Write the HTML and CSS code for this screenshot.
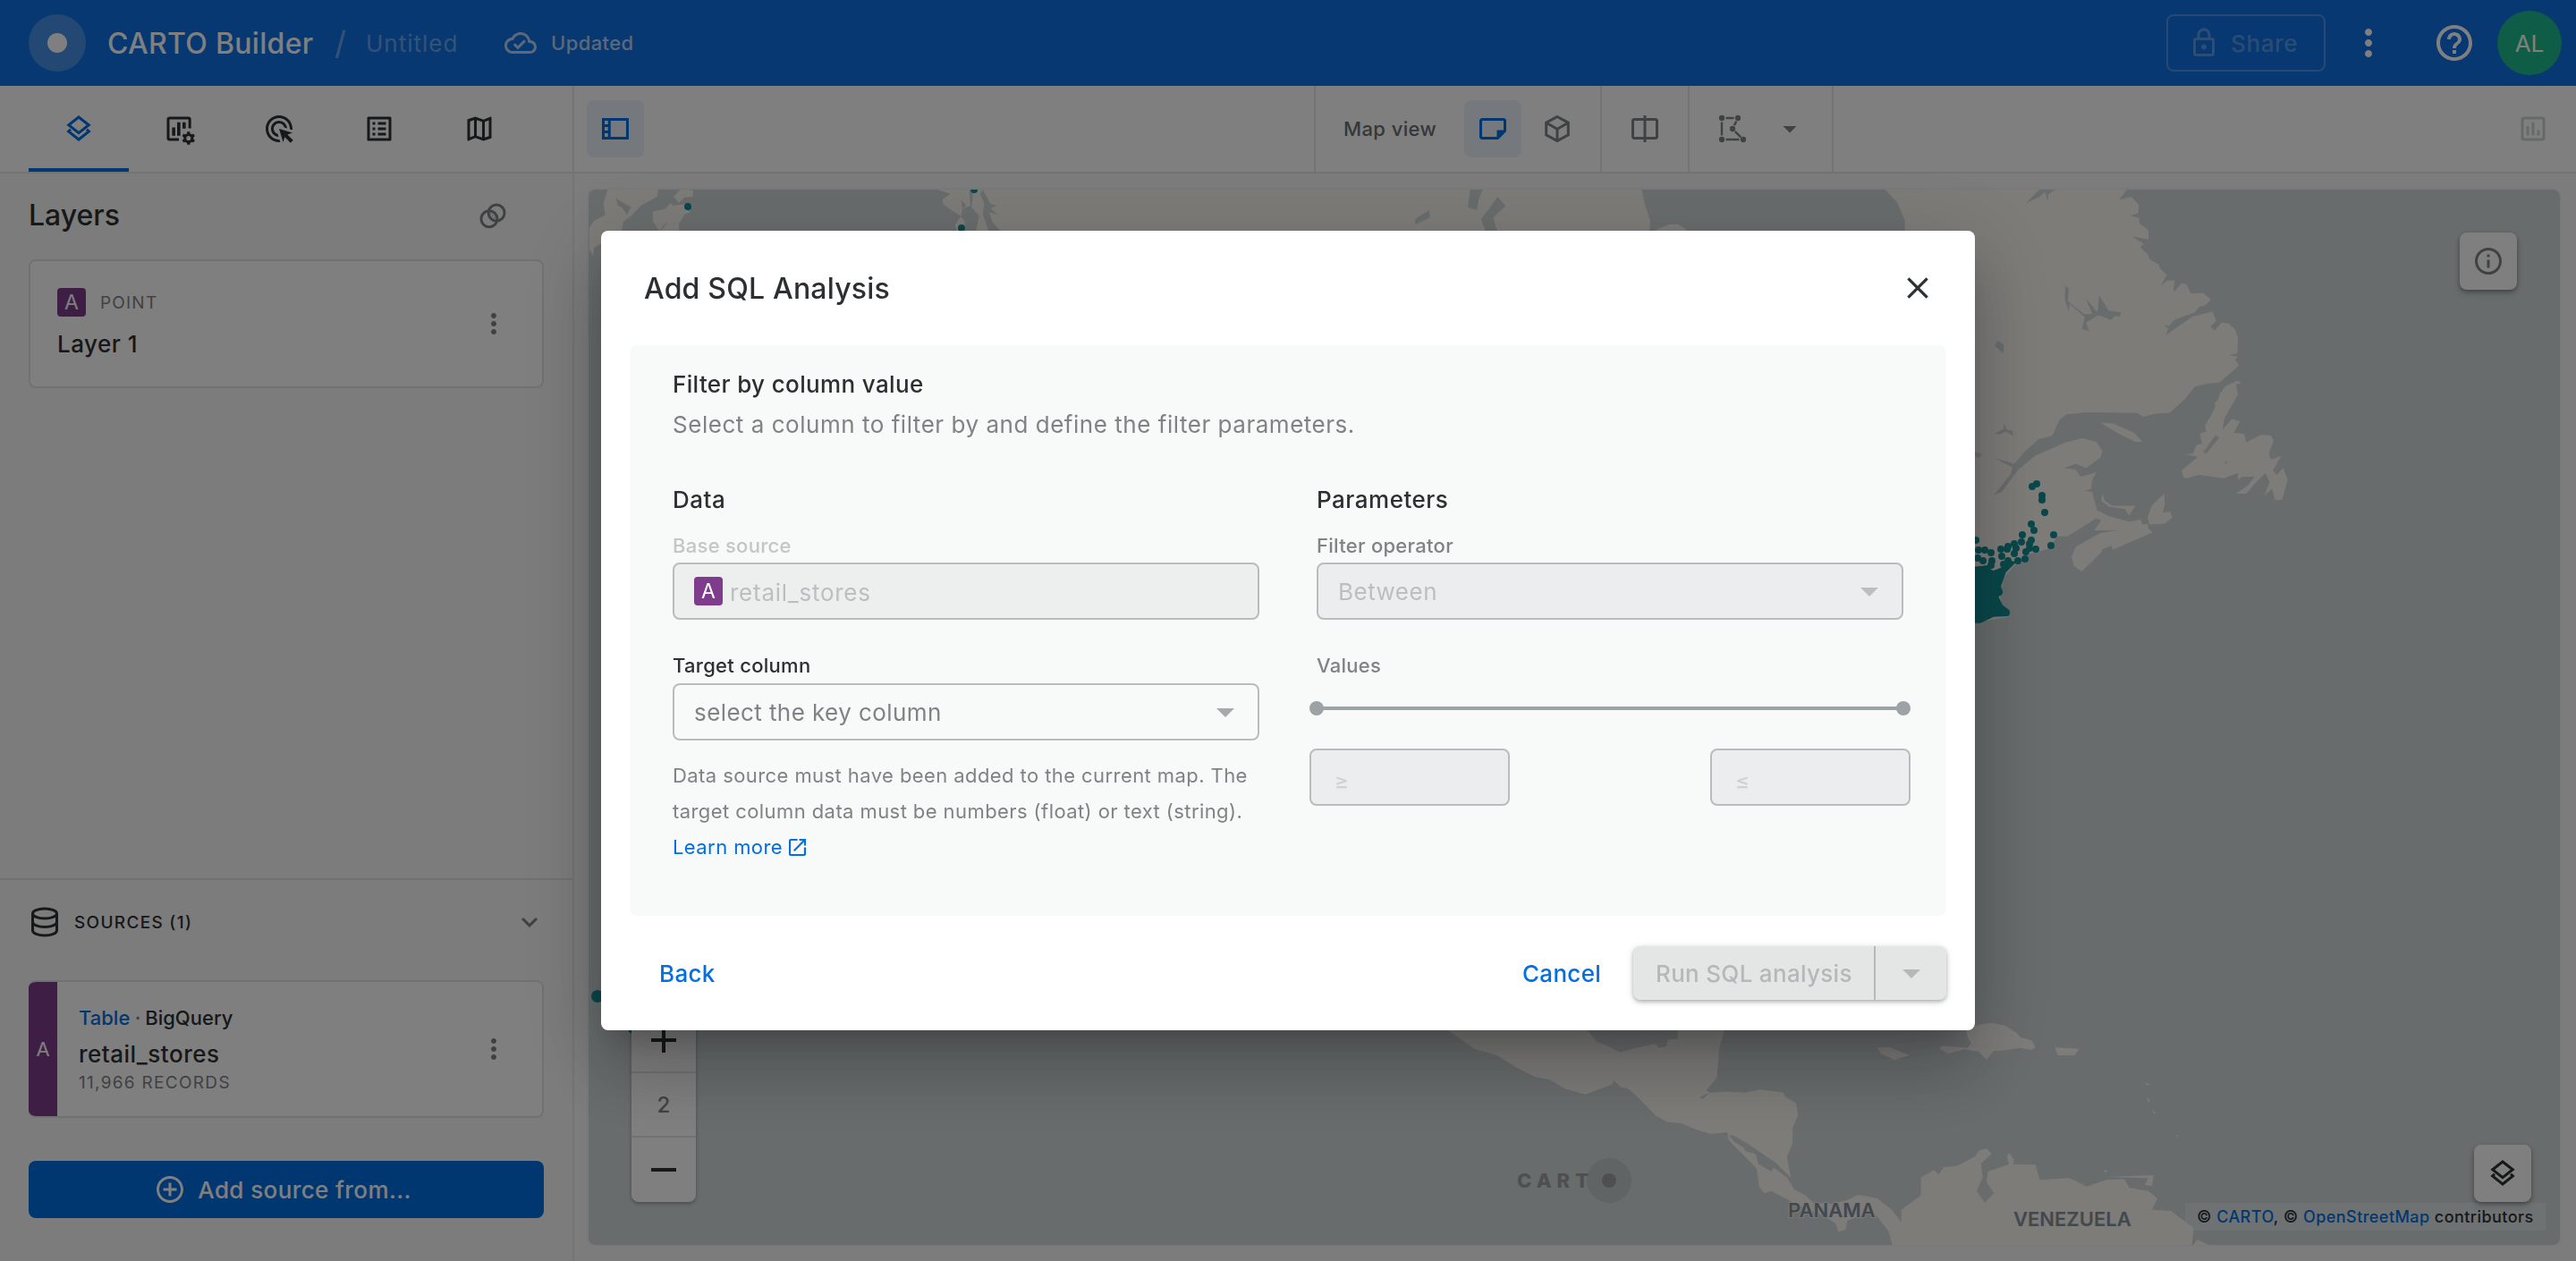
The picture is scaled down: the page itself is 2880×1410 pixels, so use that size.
FILE: index.html
```html
<!DOCTYPE html>
<html lang="en">
<head>
<meta charset="utf-8">
<title>CARTO Builder</title>
<link rel="stylesheet" href="styles.css">
</head>
<body>
<div class="app">
  <header class="topbar">
    <span class="logo"><span class="logo-dot"></span></span>
    <span class="brand">CARTO Builder</span>
    <span class="slash">/</span>
    <span class="map-name">Untitled</span>
    <svg class="i36 cloud" viewBox="0 0 24 24"><path d="M19.35 10.04C18.67 6.59 15.64 4 12 4 9.11 4 6.6 5.64 5.35 8.04 2.34 8.36 0 10.91 0 14c0 3.31 2.69 6 6 6h13c2.76 0 5-2.24 5-5 0-2.64-2.05-4.78-4.65-4.96zM19 18H6c-2.21 0-4-1.79-4-4 0-2.05 1.53-3.76 3.56-3.97l1.07-.11.5-.95C8.08 7.14 9.94 6 12 6c2.62 0 4.88 1.86 5.39 4.43l.3 1.5 1.53.11c1.56.1 2.78 1.41 2.78 2.96 0 1.65-1.35 3-3 3zm-9-3.82l-2.09-2.09L6.5 13.5 10 17l6.01-6.01-1.41-1.41z"/></svg>
    <span class="status">Updated</span>
    <span class="share"><svg class="i36" viewBox="0 0 24 24"><path d="M18 8h-1V6c0-2.76-2.24-5-5-5S7 3.24 7 6v2H6c-1.1 0-2 .9-2 2v10c0 1.100.9 2 2 2h12c1.100 0 2-.9 2-2V10c0-1.100-.9-2-2-2zM9 6c0-1.660 1.340-3 3-3s3 1.340 3 3v2H9V6zm9 14H6V10h12v10zm-6-3c1.100 0 2-.9 2-2s-.9-2-2-2-2 .9-2 2 .9 2 2 2z"/></svg><span>Share</span></span>
    <svg class="i48 top-more" viewBox="0 0 24 24"><path d="M12 8c1.100 0 2-.9 2-2s-.9-2-2-2-2 .9-2 2 .9 2 2 2zm0 2c-1.100 0-2 .9-2 2s.9 2 2 2 2-.9 2-2-.9-2-2-2zm0 6c-1.100 0-2 .9-2 2s.9 2 2 2 2-.9 2-2-.9-2-2-2z"/></svg>
    <svg class="i48 top-help" viewBox="0 0 24 24"><path d="M11 18h2v-2h-2v2zm1-16C6.480 2 2 6.480 2 12s4.480 10 10 10 10-4.480 10-10S17.520 2 12 2zm0 18c-4.410 0-8-3.590-8-8s3.590-8 8-8 8 3.590 8 8-3.590 8-8 8zm0-14c-2.210 0-4 1.790-4 4h2c0-1.100.9-2 2-2s2 .9 2 2c0 2-3 1.750-3 5h2c0-2.250 3-2.500 3-5 0-2.210-1.790-4-4-4z"/></svg>
    <span class="avatar">AL</span>
  </header>

  <div class="workspace">
    <aside class="sidebar">
      <nav class="tabs">
        <span class="tab active"><svg class="i36" viewBox="0 0 24 24"><path class="ln" d="M12 3.300l7.500 5.900-7.500 5.900-7.500-5.900z"/><path class="ln" d="M6 12.500l-1.600 1.500 7.600 6 7.600-6-1.600-1.500"/></svg></span>
        <span class="tab"><svg class="i36" viewBox="0 0 24 24"><path class="ln" d="M20.100 11.700V5c0-.6-.4-1-1-1H5c-.6 0-1 .4-1 1v14c0 .6.4 1 1 1h7"/><path d="M6.900 11h2.400v6.200H6.900zM10.700 7.200h2.400v10h-2.400zM14.700 7.200h2.400v4.600h-2.400z"/><circle class="ln" cx="19.200" cy="19" r="2.700"/><path class="cog" d="M19.200 14.100v1.800M19.200 22.100v1.800M15 16.600l1.500.9M21.900 20.500l1.500.9M15 21.400l1.500-.9M21.900 17.500l1.500-.9"/></svg></span>
        <span class="tab"><svg class="i36" viewBox="0 0 24 24"><path d="M11.710 17.990C8.530 17.840 6 15.220 6 12c0-3.310 2.690-6 6-6 3.220 0 5.840 2.530 5.990 5.710l-2.100-.63C15.480 9.310 13.890 8 12 8c-2.210 0-4 1.790-4 4 0 1.890 1.310 3.480 3.080 3.890l.63 2.100zM22 12c0 .3-.01.6-.04.9l-1.970-.59c.01-.1.010-.210.010-.310 0-4.420-3.580-8-8-8s-8 3.580-8 8 3.580 8 8 8c.1 0 .210 0 .310-.01l.59 1.970c-.3.030-.6.040-.9.040-5.520 0-10-4.480-10-10S6.480 2 12 2s10 4.480 10 10zm-3.770 4.260L22 15l-10-3 3 10 1.260-3.770 4.270 4.270 1.980-1.980-4.280-4.260z"/></svg></span>
        <span class="tab"><svg class="i36" viewBox="0 0 24 24"><path d="M19 5v14H5V5h14m1.100-2H3.900c-.5 0-.9.4-.9.9v16.200c0 .4.4.9.9.9h16.200c.4 0 .9-.5.9-.9V3.900c0-.5-.5-.9-.9-.9zM11 7h6v2h-6V7zm0 4h6v2h-6v-2zm0 4h6v2h-6zM7 7h2v2H7zm0 4h2v2H7zm0 4h2v2H7z"/></svg></span>
        <span class="tab"><svg class="i36" viewBox="0 0 24 24"><path d="M20.500 3l-.16.03L15 5.100 9 3 3.360 4.900c-.21.07-.36.25-.36.48V20.500c0 .28.22.5.5.5l.16-.03L9 18.900l6 2.100 5.640-1.900c.21-.07.36-.25.36-.48V3.500c0-.28-.22-.5-.5-.5zM10 5.470l4 1.400v11.660l-4-1.400V5.470zm-5 .99l3-1.010v11.700l-3 1.160V6.460zm14 11.080l-3 1.010V6.860l3-1.160v11.840z"/></svg></span>
      </nav>
      <div class="layers">
        <div class="layers-head"><span class="h-layers">Layers</span><svg class="i36 soft" viewBox="0 0 24 24"><circle class="ln" cx="9.300" cy="14.500" r="6"/><circle class="ln" cx="14.700" cy="10" r="6"/><path class="dots" d="M10 10.500l4 3.500M10 13l3 2.500M12 9.800l2.500 2.200"/></svg></div>
        <div class="layer-card">
          <div class="layer-info">
            <div class="layer-type"><span class="badge">A</span><span class="overline">POINT</span></div>
            <span class="layer-name">Layer 1</span>
          </div>
          <svg class="i36 soft" viewBox="0 0 24 24"><path d="M12 8c1.100 0 2-.9 2-2s-.9-2-2-2-2 .9-2 2 .9 2 2 2zm0 2c-1.100 0-2 .9-2 2s.9 2 2 2 2-.9 2-2-.9-2-2-2zm0 6c-1.100 0-2 .9-2 2s.9 2 2 2 2-.9 2-2-.9-2-2-2z"/></svg>
        </div>
      </div>
      <div class="sources">
        <div class="sources-head">
          <svg class="i36" viewBox="0 0 24 24"><ellipse class="ln" cx="12" cy="5.700" rx="9" ry="3.700"/><path class="ln" d="M3 5.700v12.600c0 2 4 3.700 9 3.700s9-1.700 9-3.700V5.700M3 12c0 2 4 3.700 9 3.700s9-1.700 9-3.700"/></svg>
          <span class="src-title">SOURCES (1)</span>
          <svg class="i36 soft chev" viewBox="0 0 24 24"><path d="M7.410 8.590L12 13.170l4.590-4.580L18 10l-6 6-6-6z"/></svg>
        </div>
        <div class="source-card">
          <span class="strip">A</span>
          <div class="source-info">
            <span class="src-kind"><b>Table</b><i> · </i>BigQuery</span>
            <span class="src-name">retail_stores</span>
            <span class="src-count">11,966 RECORDS</span>
          </div>
          <svg class="i36 soft" viewBox="0 0 24 24"><path d="M12 8c1.100 0 2-.9 2-2s-.9-2-2-2-2 .9-2 2 .9 2 2 2zm0 2c-1.100 0-2 .9-2 2s.9 2 2 2 2-.9 2-2-.9-2-2-2zm0 6c-1.100 0-2 .9-2 2s.9 2 2 2 2-.9 2-2-.9-2-2-2z"/></svg>
        </div>
        <div class="add-source"><svg class="i36" viewBox="0 0 24 24"><path d="M13 7h-2v4H7v2h4v4h2v-4h4v-2h-4V7zm-1-5C6.480 2 2 6.480 2 12s4.480 10 10 10 10-4.480 10-10S17.520 2 12 2zm0 18c-4.410 0-8-3.590-8-8s3.590-8 8-8 8 3.590 8 8-3.590 8-8 8z"/></svg><span>Add source from...</span></div>
      </div>
    </aside>

    <main class="main">
      <div class="toolbar">
        <span class="tool-btn on"><svg class="i36" viewBox="0 0 24 24"><path d="M2 4v16h20V4H2zm4.500 14H4v-2.700h2.500V18zm0-4.700H4v-2.600h2.500v2.600zm0-4.600H4V6h2.500v2.700zM20 18H8.500V6H20v12z"/></svg></span>
        <div class="tool-group view-group">
          <span class="map-view">Map view</span>
          <span class="tool-btn on"><svg class="i36" viewBox="0 0 24 24"><path d="M20 4H4c-1.100 0-2 .9-2 2v12c0 1.100.9 2 2 2h12l6-6V6c0-1.100-.9-2-2-2zM4 6h16v7h-5v5H4V6z"/></svg></span>
          <svg class="i36 soft" viewBox="0 0 24 24"><path class="ln" d="M12 3l8.200 4.500v9L12 21l-8.200-4.500v-9zM3.800 7.500l8.200 4.700 8.200-4.700M12 12v9"/></svg>
        </div>
        <div class="tool-group split-group"><svg class="i36 soft" viewBox="0 0 24 24"><path d="M13 2h-2v2H4c-1.100 0-2 .9-2 2v12c0 1.100.9 2 2 2h7v2h2v-2h7c1.100 0 2-.9 2-2V6c0-1.100-.9-2-2-2h-7V2zM4 18V6h7v12H4zm9 0V6h7v12h-7z"/></svg></div>
        <div class="tool-group draw-group">
          <svg class="i36 soft" viewBox="0 0 24 24"><circle cx="4" cy="4" r="2.100"/><circle cx="16" cy="4" r="2.100"/><circle cx="12" cy="12" r="2.100"/><circle cx="4" cy="20" r="2.100"/><circle cx="20" cy="20" r="2.100"/><path class="thin" d="M7 4h6M4 7v10M7 20h10M14.800 6.400l-1.500 3M13.800 13.900l4.400 4.300"/></svg>
          <svg class="i36 soft" viewBox="0 0 24 24"><path d="M7 10l5 5 5-5z"/></svg>
        </div>
        <svg class="i36 chart" viewBox="0 0 24 24"><path d="M19 3H5c-1.100 0-2 .9-2 2v14c0 1.100.9 2 2 2h14c1.100 0 2-.9 2-2V5c0-1.100-.9-2-2-2zm0 16H5V5h14v14zM7 10h2v7H7zm4-3h2v10h-2zm4 6h2v4h-2z"/></svg>
      </div>
      <div class="map-wrap">
        <div class="map">
          <svg class="basemap" viewBox="658 212 2204 1180">
            <g class="land">
              <g transform="scale(.61225 .33333)">
                <path d="M1110 636H1202L1200 660 1170 690 1155 720 1138 745 1135 780H1110L1098 800V815L1085 830 1083 860 1076 835V765L1085 740 1105 720 1102 680z"/>
                <path d="M1245 630L1266 640 1265 660 1250 662 1240 680 1230 660zM1225 680L1228 690 1250 685 1255 705 1262 710 1250 720 1240 750 1240 780H1205L1192 740V710L1215 700z"/>
                <path class="water" d="M1125 665L1152 695 1145 720 1135 695 1128 690zM1220 740L1212 765 1203 775z"/>
              </g>
              <g transform="translate(650 200) scale(.70153 .33333)">
                <path d="M568 36H2300V190H602L595 155 605 125 590 105 577 85 575 70 588 50z"/>
                <path class="water" d="M618 36L620 90 608 100 605 125 611 145 612 180H628L634 125 622 95 624 50zM640 36L652 85 662 88 653 100 663 120 650 112 655 145 670 180H650L640 120 642 80 635 50z"/>
                <path class="water" d="M605 70L614 90 607 100z"/>
              </g>
              <g transform="translate(1440 0) scale(.91834 .33333)" class="water">
                <path d="M430 630H725L742 680 751 740V780H490L475 752H465L440 780 441 740 435 690zM222 630H238L232 670 230 705 219 695zM255 660L265 690 250 730 255 780H241L235 735 245 700zM155 735L172 705 173 730 155 752z"/>
              </g>
              <g transform="translate(2160 200) scale(.45918 .38265)">
                <path d="M-10 30H475L455 62 485 52 503 75V100L483 108 505 115V130L527 150V177L487 168 515 190 507 200 525 220 530 235 552 250 555 262 572 280 557 312 572 298 590 296 588 332 608 305 620 308 630 335 660 333 679 353 665 370 650 374 640 390 590 412 577 430 565 427 575 437 570 456 635 402 683 388 692 415 678 432 688 442 705 420 722 422 738 440 745 465 743 510 723 514 745 520 738 528 748 545 700 595 675 597 640 607 615 645 578 684 545 686 515 695 500 684 375 682 328 688 310 704 293 750 258 762 228 795 198 835 190 865 150 925 105 948 170 915 210 850 250 810 325 770 365 758 400 768 415 795 410 815 375 845 350 833 320 845 350 850 362 870 400 858 390 880 388 905 373 912 390 915 402 968 430 985 480 1002 508 995 513 1010 525 1008 527 1022 537 1033 440 1084 437 1072 415 1082 412 1092 365 1147 345 1130 340 1105 350 1075 410 1035 450 1027 395 1027 412 998 400 992 350 1030 330 1045 305 1045 285 1080 265 1088 240 1095 200 1130 175 1165 165 1220 170 1250 185 1280 105 1297H-10z"/>
                <path d="M745 590L715 605 700 630 697 645 688 655 690 665 680 690 665 720 668 738 652 745 658 775 645 776 635 803 615 805 648 812 608 852 612 872 620 875 650 865 710 875 745 860 745 880 755 870 785 870 770 895 740 920 765 920 790 885 812 860 822 885 810 925 828 905 835 938H852L866 880 855 845 840 865 830 852 850 810 825 820 820 802 832 765 825 750 800 748 765 770 760 745 735 742 750 708 730 702 708 732 712 700 745 630 740 600 753 598z"/>
                <path d="M410 712L440 715 490 740 513 768 495 768 455 745zM415 920L420 940 440 955H495L480 983 470 965 430 958 412 940zM565 920L567 950 562 975 580 972 585 990 565 1008 530 1010 525 990 535 955z"/>
                <path class="water" d="M325 310L333 322 331 358 370 395 390 395 375 350 403 390 407 340 430 385 460 390 458 402 445 402 435 412 405 398 375 420 383 445 365 438 372 404 335 365 333 388 323 350zM152 488L160 473 175 485 173 510 160 495zM152 745L175 730V712L182 733 195 735 199 752 180 738 165 747zM228 72L262 30H302L283 45 282 65 275 38 262 52zM105 797L122 805 115 815 105 812zM150 815L200 833 195 842zM660 800L690 750 700 755 668 802zM710 835L718 822V830z"/>
              </g>
              <g transform="translate(1560 1130) scale(.84184 .33333)">
                <path d="M62 50L70 66 105 128 135 150 160 190 185 222 205 232 225 262 252 281 288 248 290 235 300 258 308 260 320 285 345 350 360 373 380 378 400 400 420 414 440 408 450 440 480 485 520 560 530 600 545 620 555 645 580 648 600 636 615 618 640 630 660 670 672 710V668L698 620V560L715 535 722 550 728 525 745 522 770 490 775 470 785 462 792 480 778 512 780 560 772 605 783 645 795 612 785 575 787 540 815 515 812 490 815 478 822 500 820 515 850 517 856 568 895 562 918 590 945 568 968 565 975 595 1000 605 1012 630 1005 668 1030 672 1060 730 1058 786H660L655 740 640 690 625 680 600 705 598 735 588 742 585 715 570 690 545 665 525 640 500 605 490 610 483 585 480 530 443 435 441 416 450 420 470 450 505 510 525 560 520 490 527 450 528 390 535 350 532 310 518 290 515 275 485 265 465 275 440 272 418 276 413 268 427 225 430 130 437 66 V50H375V95L362 97 360 120 350 125 345 112 315 128 298 140 283 120 268 105 255 66V50z"/>
                <path d="M483 535L490 560 512 590 550 640 530 645 500 605 490 612 483 590z"/>
                <path d="M758 60L780 45 793 42 810 50 825 75 830 90 845 100 850 122 845 132 830 125 805 135 795 135 785 165 775 138 755 130 735 145 723 130 725 118 760 125 765 110 760 90zM640 125L655 122 683 150 663 165 645 145zM876 124L908 128 902 150H880zM945 558L1007 552 1005 588 995 585 1000 562zM1060 786L1065 768 1080 786zM996 240L1003 248 998 250zM998 290L1002 300 1000 308zM1037 416L1041 422H1038zM940 535L947 538 943 543zM1006 330L1010 345H1007z"/>
                <path class="water" d="M462 458L472 462 474 478 465 472zM478 475L490 490 502 525 500 540 482 515zM404 290L418 275 408 297zM430 130L433 100 436 128z"/>
              </g>
            </g>
            <g class="stores">
              <path transform="translate(2160 200) scale(.45918 .38265)" d="M90 1135L128 1130 150 1145 170 1135 180 1112 205 1120 180 1150 168 1190 172 1210 162 1222 172 1245 188 1260 185 1278 150 1280 118 1298H90z"/>
              <g>
                <circle cx="769" cy="231" r="4"/><circle cx="1089" cy="212" r="4"/><circle cx="1075" cy="255" r="4"/>
                <circle cx="668" cy="1114" r="7"/><circle cx="708" cy="1150" r="6"/>
                <circle cx="2277" cy="541" r="4"/><circle cx="2272" cy="544" r="4"/><circle cx="2283" cy="554" r="4"/><circle cx="2283" cy="559" r="4"/><circle cx="2286" cy="573" r="4"/><circle cx="2271" cy="586" r="4"/><circle cx="2274" cy="593" r="4"/><circle cx="2261" cy="598" r="4"/><circle cx="2296" cy="598" r="4"/><circle cx="2293" cy="610" r="4"/><circle cx="2271" cy="604" r="4"/><circle cx="2269" cy="608" r="4"/><circle cx="2260" cy="606" r="4"/><circle cx="2252" cy="608" r="4"/><circle cx="2245" cy="611" r="4"/><circle cx="2244" cy="614" r="4"/><circle cx="2254" cy="613" r="4"/><circle cx="2276" cy="614" r="4"/><circle cx="2265" cy="617" r="4"/><circle cx="2269" cy="613" r="4"/><circle cx="2237" cy="614" r="4"/><circle cx="2252" cy="619" r="4"/><circle cx="2238" cy="622" r="4"/><circle cx="2264" cy="625" r="4"/><circle cx="2256" cy="627" r="4"/><circle cx="2226" cy="618" r="4"/><circle cx="2219" cy="615" r="4"/><circle cx="2212" cy="615" r="4"/><circle cx="2209" cy="604" r="4"/><circle cx="2211" cy="624" r="4"/><circle cx="2217" cy="627" r="4"/><circle cx="2227" cy="627" r="4"/><circle cx="2226" cy="632" r="4"/><circle cx="2240" cy="631" r="4"/><circle cx="2221" cy="636" r="4"/><circle cx="2232" cy="641" r="4"/><circle cx="2213" cy="645" r="4"/><circle cx="2235" cy="662" r="4"/><circle cx="2243" cy="685" r="4"/><circle cx="2245" cy="627" r="4"/>
              </g>
            </g>
            <g class="watermark"><circle cx="1799" cy="1320" r="25" class="wm-ring"/><circle cx="1799" cy="1320" r="8"/><text x="1696" y="1328">CART</text></g>
            <text class="country" x="1999" y="1361">PANAMA</text>
            <text class="country" x="2251" y="1371">VENEZUELA</text>
          </svg>
          <div class="map-btn info-btn"><svg class="i36 soft" viewBox="0 0 24 24"><path d="M11 7h2v2h-2zm0 4h2v6h-2zm1-9C6.480 2 2 6.480 2 12s4.480 10 10 10 10-4.480 10-10S17.520 2 12 2zm0 18c-4.410 0-8-3.590-8-8s3.590-8 8-8 8 3.590 8 8-3.590 8-8 8z"/></svg></div>
          <div class="zoomer">
            <span class="zoom-in"><svg class="i48" viewBox="0 0 24 24"><path d="M19 13h-6v6h-2v-6H5v-2h6V5h2v6h6z"/></svg></span>
            <span class="level">2</span>
            <span><svg class="i48" viewBox="0 0 24 24"><path d="M19 13H5v-2h14z"/></svg></span>
          </div>
          <div class="attribution">© <a>CARTO</a>, © <a>OpenStreetMap</a> contributors</div>
          <div class="map-btn legend-btn"><svg class="i36" viewBox="0 0 24 24"><path class="ln" d="M12 3.300l7.500 5.900-7.500 5.900-7.500-5.900z"/><path class="ln" d="M6 12.500l-1.600 1.500 7.600 6 7.600-6-1.600-1.500"/></svg></div>
        </div>
      </div>
    </main>
  </div>
</div>

<div class="backdrop">
  <section class="modal">
    <div class="modal-head"><span class="modal-title">Add SQL Analysis</span><svg class="i48 close" viewBox="0 0 24 24"><path d="M6.700 6.700l10.600 10.600M17.300 6.700L6.700 17.300"/></svg></div>
    <div class="panel">
      <div class="sub">Filter by column value</div>
      <div class="desc">Select a column to filter by and define the filter parameters.</div>
      <div class="cols">
        <div class="col">
          <div class="sec">Data</div>
          <div class="label first off">Base source</div>
          <div class="field disabled"><span class="badge">A</span><span class="base-val">retail_stores</span></div>
          <div class="label second dark">Target column</div>
          <div class="field"><span class="sel-val">select the key column</span><svg class="i48" viewBox="0 0 24 24"><path d="M7 10l5 5 5-5z"/></svg></div>
          <p class="helper">Data source must have been added to the current map. The<br>target column data must be numbers (float) or text (string).<br><a>Learn more <svg viewBox="3 3 18 18"><path d="M19 19H5V5h7V3H5c-1.110 0-2 .9-2 2v14c0 1.100.89 2 2 2h14c1.100 0 2-.9 2-2v-7h-2v7zM14 3v2h3.590l-9.830 9.830 1.410 1.410L19 6.410V10h2V3h-7z"/></svg></a></p>
        </div>
        <div class="col">
          <div class="sec">Parameters</div>
          <div class="label first">Filter operator</div>
          <div class="field disabled cool"><span class="op-val">Between</span><svg class="i48" viewBox="0 0 24 24"><path d="M7 10l5 5 5-5z"/></svg></div>
          <div class="label second">Values</div>
          <div class="slider"><span class="thumb"></span><span class="rail"></span><span class="thumb"></span></div>
          <div class="bounds"><div class="field disabled cool bound">≥</div><div class="field disabled cool bound">≤</div></div>
        </div>
      </div>
    </div>
    <div class="modal-foot">
      <a class="btn back">Back</a>
      <a class="btn cancel">Cancel</a>
      <div class="run"><span class="run-label">Run SQL analysis</span><span class="run-more"><svg class="i48" viewBox="0 0 24 24"><path d="M7 10l5 5 5-5z"/></svg></span></div>
    </div>
  </section>
</div>
</body>
</html>
```
FILE: styles.css
```css
* { box-sizing: border-box; }
body { margin: 0; font-family: Inter, "Liberation Sans", sans-serif; font-optical-sizing: none; color: #2c3032; background: #f8f9f9; }
svg { display: block; fill: currentColor; flex: none; }
.i36 { width: 36px; height: 36px; }
.i48 { width: 48px; height: 48px; }
.ln { fill: none; stroke: currentColor; stroke-width: 2; }
.cog { fill: none; stroke: currentColor; stroke-width: 2.2; }
.thin { fill: none; stroke: currentColor; stroke-width: 1.6; }
.dots { fill: none; stroke: currentColor; stroke-width: 1; stroke-dasharray: 1 1; opacity: .7; }
.soft { color: #7f8385; }
a { color: #036fe2; }

.app { width: 2880px; height: 1410px; display: flex; flex-direction: column; overflow: hidden; }
.topbar { height: 96px; flex: none; display: flex; align-items: center; padding: 0 16px 0 32px; background: #1070e3; color: #fff; }
.logo { width: 64px; height: 64px; border-radius: 50%; background: rgba(255,255,255,.23); display: flex; align-items: center; justify-content: center; }
.logo-dot { width: 22px; height: 22px; border-radius: 50%; background: #fff; }
.brand { margin-left: 24px; font-size: 32px; font-weight: 500; width: 254px; letter-spacing: .3px; }
.slash { font-size: 36px; color: rgba(255,255,255,.4); width: 35px; }
.map-name { font-size: 26px; color: rgba(255,255,255,.4); width: 155px; letter-spacing: 1px; }
.cloud { color: rgba(255,255,255,.7); }
.status { margin-left: 16px; font-size: 22px; font-weight: 500; color: rgba(255,255,255,.7); flex: 1; letter-spacing: .4px; }
.share { width: 178px; height: 64px; border: 2px solid rgba(255,255,255,.25); border-radius: 8px; display: flex; align-items: center; padding-left: 22px; gap: 12px; font-size: 26px; color: rgba(255,255,255,.3); font-weight: 500; letter-spacing: .6px; }
.top-more { margin-left: 24px; }
.top-help { margin-left: 48px; }
.avatar { margin-left: 24px; width: 72px; height: 72px; border-radius: 50%; background: #1fb88f; font-size: 26px; display: flex; align-items: center; justify-content: center; color: #fff; }

.workspace { flex: 1; display: flex; min-height: 0; }
.sidebar { width: 642px; border-right: 2px solid #e6e8e9; display: flex; flex-direction: column; }
.tabs { height: 98px; display: flex; padding-left: 32px; background: #fff; border-bottom: 2px solid #e4e6e7; }
.tab { width: 112px; height: 96px; display: flex; align-items: center; justify-content: center; }
.tab.active { color: #036fe2; border-bottom: 4px solid #036fe2; padding-top: 4px; }
.layers { padding: 0 32px; flex: 1; }
.layers-head { height: 96px; display: flex; align-items: center; justify-content: space-between; padding: 0 39px 3px 0; }
.h-layers { font-size: 32px; font-weight: 500; }
.layer-card { width: 576px; height: 144px; border: 2px solid #e1e3e4; border-radius: 8px; background: #fff; display: flex; align-items: center; justify-content: space-between; padding: 0 36px 0 30px; }
.layer-info { padding-top: 3px; }
.layer-type { display: flex; align-items: center; gap: 16px; height: 32px; margin-bottom: 11px; }
.badge { width: 32px; height: 32px; border-radius: 4px; background: #7f3c8d; color: #fff; font-size: 23px; display: flex; align-items: center; justify-content: center; flex: none; }
.overline { font-size: 19px; letter-spacing: 1.2px; color: #7f8385; }
.layer-name { font-size: 26px; font-weight: 500; line-height: 40px; letter-spacing: .5px; }
.sources { border-top: 2px solid #e1e3e4; height: 428px; flex: none; padding: 0 32px; }
.sources-head { height: 94px; display: flex; align-items: center; }
.src-title { margin-left: 15px; font-size: 19px; font-weight: 500; letter-spacing: 1.3px; flex: 1; }
.chev { margin-right: -2px; }
.source-card { margin-top: 18px; width: 576px; height: 154px; border: 2px solid #e1e3e4; border-left: 0; border-radius: 8px; background: #fff; display: flex; align-items: center; overflow: hidden; padding-right: 36px; }
.strip { width: 32px; align-self: stretch; background: #7f3c8d; color: #fff; display: flex; align-items: center; justify-content: center; font-size: 22px; }
.source-info { flex: 1; padding: 0 0 6px 24px; display: flex; flex-direction: column; }
.src-kind { font-size: 22px; font-weight: 500; line-height: 40px; }
.src-kind b { font-weight: 500; color: #036fe2; }
.src-kind i { font-style: normal; color: #7f8385; letter-spacing: -.5px; }
.src-name { font-size: 26px; font-weight: 500; line-height: 41px; letter-spacing: .5px; }
.src-count { font-size: 19px; letter-spacing: 1.3px; line-height: 23px; color: #7f8385; }
.add-source { margin-top: 48px; width: 576px; height: 64px; border-radius: 8px; background: #036fe2; color: #fff; display: flex; align-items: center; justify-content: center; gap: 13px; font-size: 26px; font-weight: 500; letter-spacing: .4px; padding-right: 8px; }

.main { flex: 1; display: flex; flex-direction: column; }
.toolbar { height: 98px; background: #fff; border-bottom: 2px solid #e4e6e7; display: flex; align-items: center; padding: 0 30px 0 14px; }
.tool-btn { width: 64px; height: 64px; border-radius: 8px; display: flex; align-items: center; justify-content: center; }
.tool-btn.on { background: #eaf2fd; color: #036fe2; }
.tool-group { height: 96px; display: flex; align-items: center; border-left: 2px solid #e4e6e7; }
.view-group { width: 320px; margin-left: 749px; padding-left: 31px; }
.map-view { font-size: 22px; font-weight: 500; width: 135px; color: #6a6e70; letter-spacing: .4px; }
.view-group .i36.soft { margin-left: 22px; }
.split-group { width: 98px; justify-content: center; }
.draw-group { width: 163px; padding-left: 30px; gap: 28px; border-right: 2px solid #e4e6e7; }
.chart { margin-left: auto; color: #cfd1d2; }
.map-wrap { padding: 18px 18px 18px 16px; flex: 1; }
.map { position: relative; height: 1180px; background: #d2d9db; border-radius: 8px; overflow: hidden; box-shadow: 0 0 0 2px #f0f2f2; }
.basemap { width: 2204px; height: 1180px; }
.land { fill: #faf8f3; }
.water { fill: #d2d9db; }
.stores { fill: #138f95; }
.watermark { fill: #9a9fa1; font-size: 22px; font-weight: 800; letter-spacing: 6px; }
.wm-ring { fill: #c2c8ca; }
.country { font-size: 22px; font-weight: 600; fill: #84919c; stroke: #f5f5f1; stroke-width: 2; paint-order: stroke; }
.map-btn { position: absolute; width: 64px; height: 64px; border-radius: 8px; background: #fff; display: flex; align-items: center; justify-content: center; box-shadow: 0 2px 4px rgba(0,0,0,.3), 0 4px 10px rgba(0,0,0,.15); }
.info-btn { right: 48px; top: 48px; }
.legend-btn { right: 32px; bottom: 48px; }
.zoomer { position: absolute; left: 48px; bottom: 48px; width: 72px; background: #fff; border-radius: 8px; box-shadow: 0 2px 4px rgba(0,0,0,.3); }
.zoomer span { height: 72px; display: flex; align-items: center; justify-content: center; }
.zoomer .zoom-in { height: 70px; }
.zoomer .level { height: 74px; border-top: 2px solid #e1e3e4; border-bottom: 2px solid #e1e3e4; font-size: 24px; font-weight: 500; color: #7f8385; }
.attribution { position: absolute; right: 16px; bottom: 16px; height: 31px; width: 403px; padding: 0 13px; font-size: 18px; font-weight: 500; line-height: 31px; background: rgba(255,255,255,.3); white-space: nowrap; letter-spacing: .45px; }

.backdrop { position: fixed; inset: 0; background: rgba(0,0,0,.5); display: flex; align-items: center; justify-content: center; }
.modal { width: 1536px; height: 894px; border-radius: 8px; background: #fff; box-shadow: 0 22px 30px -14px rgba(0,0,0,.2), 0 48px 76px 6px rgba(0,0,0,.14), 0 18px 92px 16px rgba(0,0,0,.12); padding: 0 32px; }
.modal-head { height: 128px; display: flex; align-items: center; justify-content: space-between; padding: 0 8px 0 16px; }
.modal-title { font-size: 32px; font-weight: 500; letter-spacing: .2px; }
.close { fill: none; stroke: #2c3032; stroke-width: 1.6; }
.panel { height: 638px; border-radius: 8px; background: #f8f9f9; padding: 20px 48px 0; }
.sub { font-size: 26px; font-weight: 500; line-height: 48px; letter-spacing: .36px; }
.desc { font-size: 26px; line-height: 42px; color: #7f8385; letter-spacing: .53px; }
.cols { margin-top: 39px; display: grid; grid-template-columns: 656px 656px; gap: 64px; }
.sec { font-size: 26px; font-weight: 500; line-height: 48px; letter-spacing: .5px; }
.label { font-size: 22px; font-weight: 500; color: #7f8385; letter-spacing: .28px; }
.label.first { margin-top: 8px; line-height: 38px; }
.label.second { margin-top: 31px; line-height: 40px; }
.label.off { color: #c3c5c6; }
.label.dark { color: #2c3032; }
.field { height: 64px; border: 2px solid #b9bbbc; border-radius: 8px; display: flex; align-items: center; padding: 0 12px 0 22px; font-size: 26px; color: #7f8385; }
.field.disabled { background: #edeeee; color: #bcbebf; }
.field.cool { background: #ecedef; }
.field svg { margin-left: auto; color: #a7a9ab; }
.field.disabled svg { color: #bcbebf; }
.base-val { margin-left: 8px; padding-top: 2px; letter-spacing: .75px; }
.sel-val { letter-spacing: .42px; }
.op-val { letter-spacing: .5px; }
.helper { margin: 19px 0 0; font-size: 22px; line-height: 40px; color: #7f8385; letter-spacing: .42px; white-space: nowrap; }
.helper svg { display: inline; width: 19px; height: 19px; vertical-align: -2px; }
.slider { margin: 20px -8px 0; height: 16px; display: flex; align-items: center; }
.thumb { width: 16px; height: 16px; border-radius: 50%; background: #9da2a6; }
.rail { flex: 1; height: 4px; margin: 0 -1px; background: #9da2a6; }
.bounds { margin: 37px -8px 0; display: flex; justify-content: space-between; }
.field.bound { width: 224px; padding: 8px 0 0 26px; font-size: 24px; color: #cfd1d3; font-weight: 500; }
.modal-foot { height: 128px; display: flex; align-items: center; padding-left: 33px; font-size: 26px; font-weight: 500; letter-spacing: .3px; }
.cancel { margin-left: auto; width: 124px; }
.run { width: 350px; height: 60px; display: flex; align-items: center; background: #e4e6e6; color: #b5b8b9; border-radius: 8px; box-shadow: 0 2px 4px rgba(0,0,0,.25), 0 2px 10px rgba(0,0,0,.12); }
.run-label { width: 269px; padding-left: 25px; }
.run-more { flex: 1; height: 60px; border-left: 2px solid #b5b8b9; display: flex; align-items: center; justify-content: center; }
```
